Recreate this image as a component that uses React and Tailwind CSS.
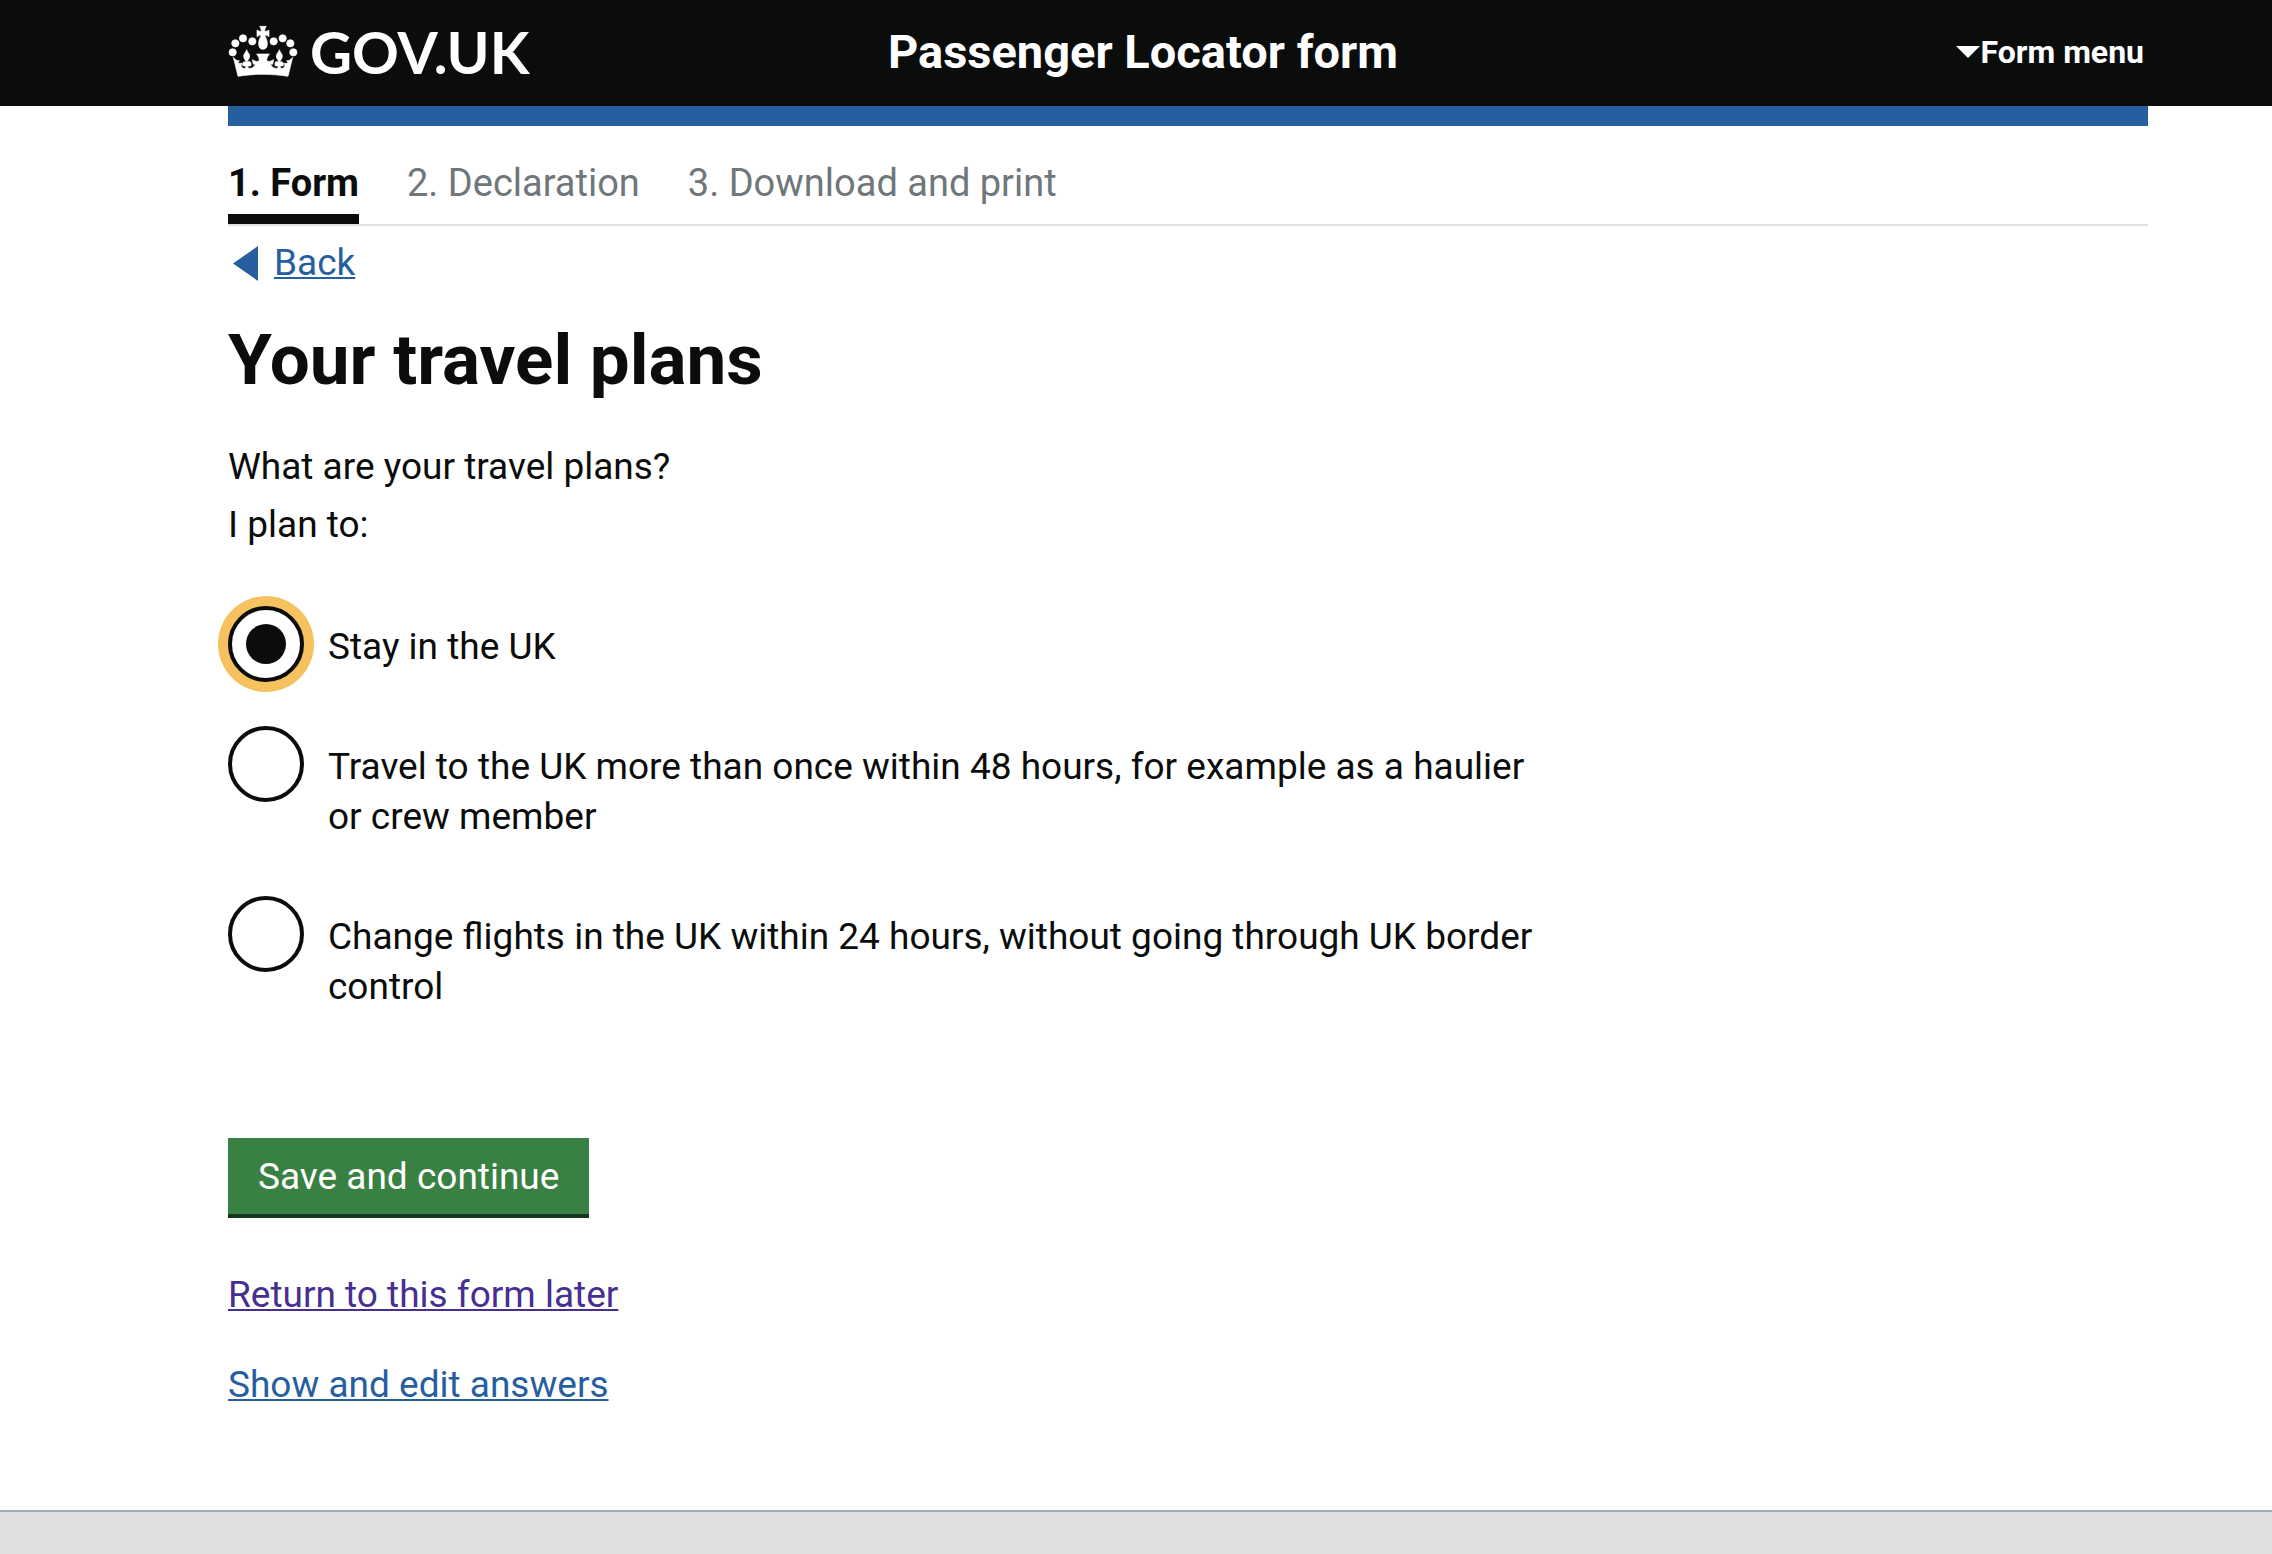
import { useState } from 'react';

const STEPS = ['1. Form', '2. Declaration', '3. Download and print'];

const PLANS = [
  { id: 'stay', label: 'Stay in the UK' },
  { id: 'frequent', label: 'Travel to the UK more than once within 48 hours, for example as a haulier or crew member' },
  { id: 'transit', label: 'Change flights in the UK within 24 hours, without going through UK border control' },
];

function Crown() {
  return (
    <svg viewBox="6 0 210 180" className="w-[70px] h-[60px] shrink-0" fill="white" stroke="white" strokeWidth="2" aria-hidden="true">
      {/* pearls */}
      <circle cx="20" cy="91" r="11" />
      <circle cx="28" cy="64" r="11" />
      <circle cx="51" cy="49" r="11" />
      <circle cx="79" cy="58" r="11" />
      <circle cx="143" cy="58" r="11" />
      <circle cx="170" cy="49" r="11" />
      <circle cx="193" cy="64" r="11" />
      <circle cx="202" cy="91" r="11" />
      {/* top cross and orb */}
      <path d="M101 13h20c-4 6-5 10-5 15 5 0 9-1 13-4v20c-4-3-8-5-12-5 0 6 7 12 7 27 0 10-5 16-13 16s-13-6-13-16c0-15 7-21 7-27-4 0-8 2-12 5V24c4 3 8 4 13 4 0-5-1-9-5-15z" />
      {/* band with its two side points */}
      <path d="M22 106c6 8 12 11 18 10l-4 6c4 3 8 3 12 1-4 8-3 13 4 16 4 1 8-1 8-6l-10-2v-8c4-6 10-4 12-1-3-8-9-11-9-20 0-7 6-10 9-19 3 9 9 12 9 19 0 9-6 12-9 20 4-4 12-5 13 1v8l-10 2c0 5 4 7 9 6 8-2 12-6 14-13l-6 1-3-14 8 4c7 3 12 1 13-3 0-5-4-12-8-18h38c-4 6-8 13-8 18 1 4 6 6 13 3l8-4-3 14-6-1c2 7 6 11 14 13 5 1 9-1 9-6l-10-2v-8c1-6 9-5 13-1-3-8-9-11-9-20 0-7 6-10 9-19 3 9 9 12 9 19 0 9-6 12-9 20 2-3 8-5 12 1v8l-10 2c0 5 4 7 8 6 7-3 8-8 4-16 4 2 8 2 12-1l-4-6c6 1 12-2 18-10l-14 57c-49-8-101-8-150 0z" />
    </svg>
  );
}

function Header() {
  return (
    <header className="bg-[#0b0c0c] text-white">
      <div className="h-[106px] pl-[228px] pr-[128px] pb-0.5 flex items-center">
        <a href="#home" className="w-[640px] flex items-center gap-3">
          <Crown />
          <span className="font-['Lato',sans-serif] font-bold text-[58px] leading-[64px]">GOV.UK</span>
        </a>
        <a href="#form" className="pl-5 font-bold text-[47px] leading-[60px]">Passenger Locator form</a>
        <button type="button" className="ml-auto flex items-center font-bold text-[32px] leading-10 cursor-pointer">
          <svg viewBox="0 0 24 12" className="w-6 h-3" fill="currentColor" aria-hidden="true">
            <path d="M0 0h24L12 12z" />
          </svg>
          Form menu
        </button>
      </div>
    </header>
  );
}

export default function App() {
  const [plan, setPlan] = useState('stay');

  return (
    <div className="min-h-screen flex flex-col bg-white text-[#0b0c0c] font-['Roboto',sans-serif] text-[37px] leading-[50px]">
      <Header />

      <div className="pl-[228px] pr-[124px]">
        <div className="h-5 bg-[#265ea0]" />

        {/* Steps */}
        <nav className="pt-8 border-b-2 border-[#dee0e2] text-[38px] leading-[50px]">
          <ol className="flex gap-12">
            {STEPS.map((step, i) => (
              <li
                key={step}
                aria-current={i === 0 ? 'step' : undefined}
                className={i === 0 ? 'font-bold pb-1.5 border-b-10 border-[#0b0c0c]' : 'text-[#6f777b]'}
              >
                {step}
              </li>
            ))}
          </ol>
        </nav>

        <a href="#back" className="mt-3 pl-[5px] w-fit flex items-center gap-4 text-[#265ea0]">
          <svg viewBox="0 0 25 35" className="w-[25px] h-[35px]" fill="currentColor" aria-hidden="true">
            <path d="M25 0v35L0 17.500z" />
          </svg>
          <span className="underline decoration-2 underline-offset-2">Back</span>
        </a>

        <main className="pt-8 pb-[100px]">
          <h1 className="font-bold text-[71px] leading-20">Your travel plans</h1>

          <form onSubmit={(e) => e.preventDefault()}>
            <fieldset className="mt-[42px] max-w-[1336px]">
              <legend>What are your travel plans?</legend>
              <p className="mt-2">I plan to:</p>

              <div className="mt-[54px] flex flex-col gap-10">
                {PLANS.map(({ id, label }) => (
                  <div key={id} className="flex items-start gap-6">
                    <input
                      type="radio"
                      name="plan"
                      id={id}
                      checked={plan === id}
                      onChange={() => setPlan(id)}
                      className="mt-0.5 size-[76px] shrink-0 appearance-none grid place-content-center rounded-full border-4 border-[#0b0c0c] bg-white checked:ring-10 checked:ring-[#f6c15f] before:size-10 before:rounded-full checked:before:bg-[#0b0c0c]"
                    />
                    <label htmlFor={id} className="pt-[18px] pb-3">{label}</label>
                  </div>
                ))}
              </div>
            </fieldset>

            <button
              type="submit"
              className="mt-[114px] pt-3.5 pb-3 px-[30px] bg-[#398143] border-b-4 border-[#16371f] text-white cursor-pointer"
            >
              Save and continue
            </button>
          </form>

          <div className="mt-[52px] flex flex-col items-start gap-10">
            <a href="#later" className="text-[#472f91] underline decoration-2 underline-offset-2">Return to this form later</a>
            <a href="#answers" className="text-[#265ea0] underline decoration-2 underline-offset-2">Show and edit answers</a>
          </div>
        </main>
      </div>

      <footer className="grow border-t-2 border-[#a1acb2] bg-[#dee0e2]" />
    </div>
  );
}
